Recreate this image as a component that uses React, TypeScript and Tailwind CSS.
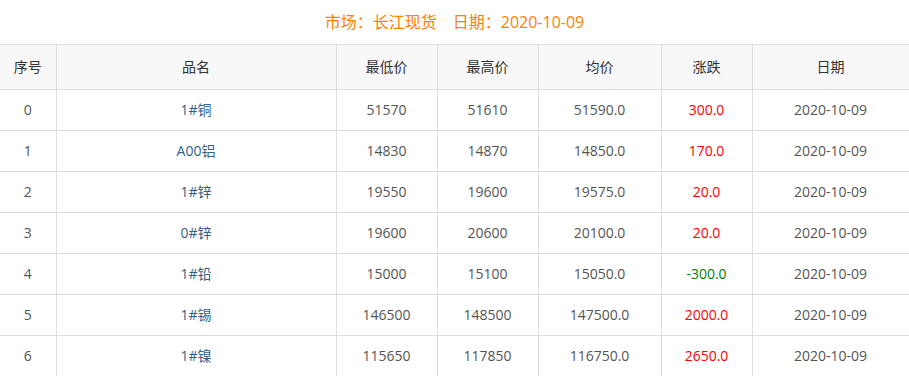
const rows = [
  { id: 0, name: '1#铜', low: '51570', high: '51610', avg: '51590.0', chg: '300.0', date: '2020-10-09' },
  { id: 1, name: 'A00铝', low: '14830', high: '14870', avg: '14850.0', chg: '170.0', date: '2020-10-09' },
  { id: 2, name: '1#锌', low: '19550', high: '19600', avg: '19575.0', chg: '20.0', date: '2020-10-09' },
  { id: 3, name: '0#锌', low: '19600', high: '20600', avg: '20100.0', chg: '20.0', date: '2020-10-09' },
  { id: 4, name: '1#铅', low: '15000', high: '15100', avg: '15050.0', chg: '-300.0', date: '2020-10-09' },
  { id: 5, name: '1#锡', low: '146500', high: '148500', avg: '147500.0', chg: '2000.0', date: '2020-10-09' },
  { id: 6, name: '1#镍', low: '115650', high: '117850', avg: '116750.0', chg: '2650.0', date: '2020-10-09' },
];

const cols = ['序号', '品名', '最低价', '最高价', '均价', '涨跌', '日期'];
const widths = ['w-[56px]', 'w-[280px]', 'w-[101px]', 'w-[101px]', 'w-[123px]', 'w-[91px]', 'w-[157px]'];

export default function App() {
  return (
    <div className="w-[909px] bg-white font-['Open_Sans','Noto_Sans_CJK_SC',sans-serif] text-[14px]">
      <div className="h-[44px] flex items-center justify-center text-[16px] text-[#ff7f00]">
        市场：长江现货　日期：2020-10-09
      </div>
      <table className="w-[909px] border-collapse table-fixed">
        <colgroup>
          {widths.map((w, i) => (
            <col key={i} className={w} />
          ))}
        </colgroup>
        <thead>
          <tr className="h-[45px] bg-[#f8f8f8]">
            {cols.map((c, i) => (
              <th
                key={c}
                className={`font-normal text-[#333] border border-[#ddd] pb-[1px] ${i === 0 ? 'border-l-0' : ''}`}
              >
                {c}
              </th>
            ))}
          </tr>
        </thead>
        <tbody>
          {rows.map((r) => (
            <tr key={r.id} className="h-[41px] text-center text-[#555] [&>td]:pb-[2px]">
              <td className="border border-[#ddd] border-l-0">{r.id}</td>
              <td className="border border-[#ddd] text-[#2f5f8a]">{r.name}</td>
              <td className="border border-[#ddd]">{r.low}</td>
              <td className="border border-[#ddd]">{r.high}</td>
              <td className="border border-[#ddd]">{r.avg}</td>
              <td className={`border border-[#ddd] ${r.chg.startsWith('-') ? 'text-[#008000]' : 'text-[#ff0000]'}`}>
                {r.chg}
              </td>
              <td className="border border-[#ddd]">{r.date}</td>
            </tr>
          ))}
        </tbody>
      </table>
    </div>
  );
}
